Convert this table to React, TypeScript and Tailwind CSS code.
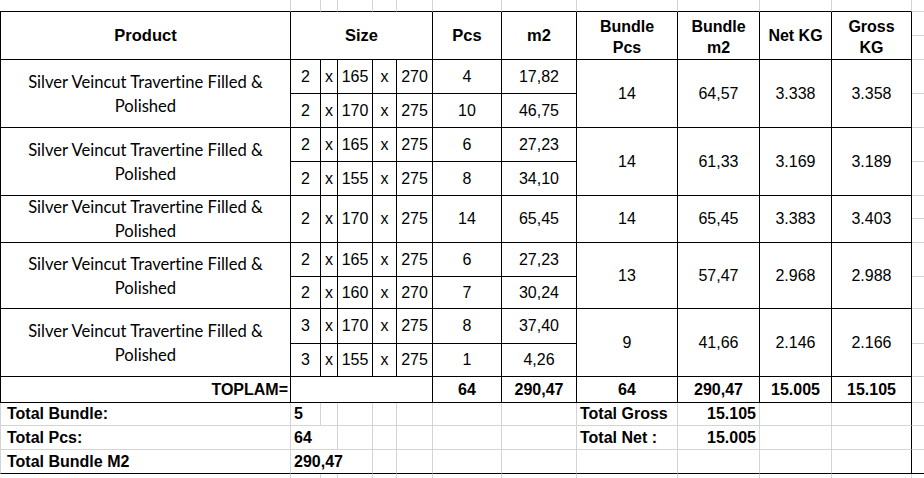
import { Fragment } from "react";

type Line = { t: string; a: string; b: string; pcs: string; m2: string };
type Group = { rows: Line[]; bp: string; bm2: string; net: string; gross: string };

const groups: Group[] = [
  {
    rows: [
      { t: "2", a: "165", b: "270", pcs: "4", m2: "17,82" },
      { t: "2", a: "170", b: "275", pcs: "10", m2: "46,75" },
    ],
    bp: "14", bm2: "64,57", net: "3.338", gross: "3.358",
  },
  {
    rows: [
      { t: "2", a: "165", b: "275", pcs: "6", m2: "27,23" },
      { t: "2", a: "155", b: "275", pcs: "8", m2: "34,10" },
    ],
    bp: "14", bm2: "61,33", net: "3.169", gross: "3.189",
  },
  {
    rows: [{ t: "2", a: "170", b: "275", pcs: "14", m2: "65,45" }],
    bp: "14", bm2: "65,45", net: "3.383", gross: "3.403",
  },
  {
    rows: [
      { t: "2", a: "165", b: "275", pcs: "6", m2: "27,23" },
      { t: "2", a: "160", b: "270", pcs: "7", m2: "30,24" },
    ],
    bp: "13", bm2: "57,47", net: "2.968", gross: "2.988",
  },
  {
    rows: [
      { t: "3", a: "170", b: "275", pcs: "8", m2: "37,40" },
      { t: "3", a: "155", b: "275", pcs: "1", m2: "4,26" },
    ],
    bp: "9", bm2: "41,66", net: "2.146", gross: "2.166",
  },
];

// every cell draws its own right + bottom edge, like the sheet's grid
const dark = "flex items-center justify-center border-r border-b border-black";
const light = "flex items-center border-r border-b border-[#d4d4d4]";
const edge = "border-b border-[#d4d4d4]";

export default function App() {
  return (
    <div className="h-[478px] w-[924px] overflow-hidden bg-white text-[16px] leading-none text-black font-['Liberation_Sans',Arial,sans-serif]">
      <div className="grid h-[478px] grid-cols-[291px_30px_17px_35px_24px_36px_69px_75px_101px_82px_72px_80px_1fr] grid-rows-[12px_48px_34px_34px_34px_34px_47px_34px_32px_35px_33px_26px_23px_24px_24px_1fr]">
        {/* ── spacer row above the table ── */}
        {Array.from({ length: 12 }, (_, i) => (
          <div key={`top-${i}`} className="border-r border-b border-r-[#d4d4d4] border-b-black" />
        ))}
        <div className={edge} />

        {/* ── header ── */}
        <div className={`${dark} border-l text-[16.5px] font-bold`}>Product</div>
        <div className={`${dark} col-span-5 text-[16.5px] font-bold`}>Size</div>
        <div className={`${dark} text-[16.5px] font-bold`}>Pcs</div>
        <div className={`${dark} text-[16.5px] font-bold`}>m2</div>
        <div className={`${dark} pt-[3px] text-center font-bold leading-[21px]`}>Bundle<br />Pcs</div>
        <div className={`${dark} pt-[3px] text-center font-bold leading-[21px]`}>Bundle<br />m2</div>
        <div className={`${dark} font-bold`}>Net KG</div>
        <div className={`${dark} pt-[3px] text-center font-bold leading-[21px]`}>Gross<br />KG</div>
        <div className="flex flex-col">
          <div className="h-[24px] border-b border-[#d4d4d4]" />
          <div className="flex-1 border-b border-[#d4d4d4]" />
        </div>

        {/* ── product rows ── */}
        {groups.map((g, gi) =>
          g.rows.map((r, ri) => (
            <Fragment key={`${gi}-${ri}`}>
              {ri === 0 && (
                <div
                  className={`${dark} border-l text-center text-[16.6px] leading-[24px] font-['Lato',sans-serif] [font-variant-ligatures:none] ${
                    g.rows.length === 2 ? "row-span-2" : "row-span-1"
                  }`}
                >
                  Silver Veincut Travertine Filled &amp;
                  <br />
                  Polished
                </div>
              )}
              <div className={dark}>{r.t}</div>
              <div className={dark}>x</div>
              <div className={dark}>{r.a}</div>
              <div className={dark}>x</div>
              <div className={dark}>{r.b}</div>
              <div className={dark}>{r.pcs}</div>
              <div className={dark}>{r.m2}</div>
              {ri === 0 && (
                <>
                  <div className={`${dark} ${g.rows.length === 2 ? "row-span-2" : "row-span-1"}`}>{g.bp}</div>
                  <div className={`${dark} ${g.rows.length === 2 ? "row-span-2" : "row-span-1"}`}>{g.bm2}</div>
                  <div className={`${dark} ${g.rows.length === 2 ? "row-span-2" : "row-span-1"}`}>{g.net}</div>
                  <div className={`${dark} ${g.rows.length === 2 ? "row-span-2" : "row-span-1"}`}>{g.gross}</div>
                </>
              )}
              {g.rows.length === 1 ? (
                <div className="flex flex-col">
                  <div className="h-[23px] border-b border-[#d4d4d4]" />
                  <div className="flex-1 border-b border-[#d4d4d4]" />
                </div>
              ) : (
                <div className={edge} />
              )}
            </Fragment>
          ))
        )}

        {/* ── totals row ── */}
        <div className={`${dark} justify-end border-l pr-[2px] font-bold`}>TOPLAM=</div>
        <div className={`${dark} col-span-5`} />
        <div className={`${dark} font-bold`}>64</div>
        <div className={`${dark} font-bold`}>290,47</div>
        <div className={`${dark} font-bold`}>64</div>
        <div className={`${dark} font-bold`}>290,47</div>
        <div className={`${dark} font-bold`}>15.005</div>
        <div className={`${dark} font-bold`}>15.105</div>
        <div className={edge} />

        {/* ── summary block ── */}
        <div className={`${light} border-l pl-[6px] font-bold`}>Total Bundle:</div>
        <div className={`${light} pl-[3px] font-bold`}>5</div>
        <div className={light} />
        <div className={light} />
        <div className={light} />
        <div className={light} />
        <div className={light} />
        <div className={light} />
        <div className={`${light} pl-[3px] font-bold`}>Total Gross</div>
        <div className={`${light} justify-end pr-[3px] font-bold`}>15.105</div>
        <div className={light} />
        <div className={`${light} border-r-black`} />
        <div className={edge} />

        <div className={`${light} border-l pl-[6px] font-bold`}>Total Pcs:</div>
        <div className={`${light} col-span-2 pl-[3px] font-bold`}>64</div>
        <div className={light} />
        <div className={light} />
        <div className={light} />
        <div className={light} />
        <div className={light} />
        <div className={`${light} pl-[3px] font-bold`}>Total Net :</div>
        <div className={`${light} justify-end pr-[3px] font-bold`}>15.005</div>
        <div className={light} />
        <div className={`${light} border-r-black`} />
        <div className={edge} />

        <div className={`${light} border-l border-b-black pl-[6px] font-bold`}>Total Bundle M2</div>
        <div className={`${light} col-span-3 border-b-black pl-[3px] font-bold`}>290,47</div>
        <div className={`${light} border-b-black`} />
        <div className={`${light} border-b-black`} />
        <div className={`${light} border-b-black`} />
        <div className={`${light} border-b-black`} />
        <div className={`${light} border-b-black`} />
        <div className={`${light} border-b-black`} />
        <div className={`${light} border-b-black`} />
        <div className={`${light} border-r-black border-b-black`} />
        <div className="border-b border-black" />

        {/* ── sheet continues below ── */}
        {Array.from({ length: 12 }, (_, i) => (
          <div key={`bot-${i}`} className="border-r border-[#d4d4d4]" />
        ))}
        <div />
      </div>
    </div>
  );
}
